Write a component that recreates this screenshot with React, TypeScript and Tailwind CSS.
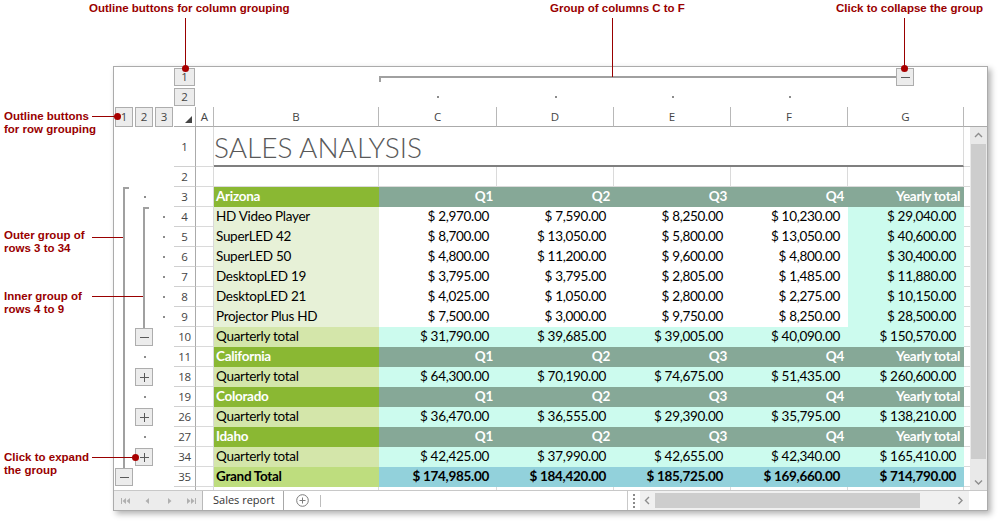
import React from 'react';

type Kind = 'state' | 'product' | 'qtotal' | 'grand';
type SheetRow = { n: number; kind: Kind; label: string; values: string[] };

const QS = ['Q1', 'Q2', 'Q3', 'Q4', 'Yearly total'];
const WIDTHS = ['w-[118px]', 'w-[117px]', 'w-[117px]', 'w-[117px]', 'w-[116px]'];

const ROWS: SheetRow[] = [
  { n: 3, kind: 'state', label: 'Arizona', values: QS },
  { n: 4, kind: 'product', label: 'HD Video Player', values: ['$ 2,970.00', '$ 7,590.00', '$ 8,250.00', '$ 10,230.00', '$ 29,040.00'] },
  { n: 5, kind: 'product', label: 'SuperLED 42', values: ['$ 8,700.00', '$ 13,050.00', '$ 5,800.00', '$ 13,050.00', '$ 40,600.00'] },
  { n: 6, kind: 'product', label: 'SuperLED 50', values: ['$ 4,800.00', '$ 11,200.00', '$ 9,600.00', '$ 4,800.00', '$ 30,400.00'] },
  { n: 7, kind: 'product', label: 'DesktopLED 19', values: ['$ 3,795.00', '$ 3,795.00', '$ 2,805.00', '$ 1,485.00', '$ 11,880.00'] },
  { n: 8, kind: 'product', label: 'DesktopLED 21', values: ['$ 4,025.00', '$ 1,050.00', '$ 2,800.00', '$ 2,275.00', '$ 10,150.00'] },
  { n: 9, kind: 'product', label: 'Projector Plus HD', values: ['$ 7,500.00', '$ 3,000.00', '$ 9,750.00', '$ 8,250.00', '$ 28,500.00'] },
  { n: 10, kind: 'qtotal', label: 'Quarterly total', values: ['$ 31,790.00', '$ 39,685.00', '$ 39,005.00', '$ 40,090.00', '$ 150,570.00'] },
  { n: 11, kind: 'state', label: 'California', values: QS },
  { n: 18, kind: 'qtotal', label: 'Quarterly total', values: ['$ 64,300.00', '$ 70,190.00', '$ 74,675.00', '$ 51,435.00', '$ 260,600.00'] },
  { n: 19, kind: 'state', label: 'Colorado', values: QS },
  { n: 26, kind: 'qtotal', label: 'Quarterly total', values: ['$ 36,470.00', '$ 36,555.00', '$ 29,390.00', '$ 35,795.00', '$ 138,210.00'] },
  { n: 27, kind: 'state', label: 'Idaho', values: QS },
  { n: 34, kind: 'qtotal', label: 'Quarterly total', values: ['$ 42,425.00', '$ 37,990.00', '$ 42,655.00', '$ 42,340.00', '$ 165,410.00'] },
  { n: 35, kind: 'grand', label: 'Grand Total', values: ['$ 174,985.00', '$ 184,420.00', '$ 185,725.00', '$ 169,660.00', '$ 714,790.00'] },
];

const FILL: Record<Kind, { b: string; c: string; g: string }> = {
  state: {
    b: 'bg-[#8ab833] text-white font-bold',
    c: 'bg-[#86a897] text-white font-bold pr-[3px]',
    g: 'bg-[#86a897] text-white font-bold pr-[3px]',
  },
  product: { b: 'bg-[#e7f1d7]', c: 'bg-white pr-[7px]', g: 'bg-[#ccfbee] pr-[7px]' },
  qtotal: { b: 'bg-[#d4e6aa]', c: 'bg-[#ccfbee] pr-[7px]', g: 'bg-[#ccfbee] pr-[7px]' },
  grand: { b: 'bg-[#bedd7e] font-bold', c: 'bg-[#92d1db] font-bold pr-[7px]', g: 'bg-[#92d1db] font-bold pr-[7px]' },
};

const GRID = 'border-r border-b border-[#dadada]';
const UI_FONT = "font-['Open_Sans'] text-[11.5px] text-[#444]";

const Minus = () => (
  <svg width="9" height="1" viewBox="0 0 9 1">
    <rect width="9" height="1" fill="#5a5a5a" />
  </svg>
);

const Plus = () => (
  <svg width="9" height="9" viewBox="0 0 9 9">
    <path d="M4.5 0v9M0 4.5h9" stroke="#5a5a5a" strokeWidth="1" />
  </svg>
);

const OutlineBtn = ({ children, className = '' }: { children: React.ReactNode; className?: string }) => (
  <div
    className={`flex items-center justify-center border border-[#adadad] bg-[#ececec] ${UI_FONT} text-[#333] leading-none ${className}`}
  >
    {children}
  </div>
);

const Dot = ({ className = '' }: { className?: string }) => (
  <div className={`absolute w-[2px] h-[2px] bg-[#8c8c8c] ${className}`} />
);

const RowNum = ({ n, tall = false }: { n?: number; tall?: boolean }) => (
  <div
    className={`w-[22px] ${tall ? 'h-[40px]' : 'h-[20px]'} shrink-0 border-r border-b border-r-[#ababab] border-b-[#d0d0d0] flex items-center justify-center ${UI_FONT}`}
  >
    {n}
  </div>
);

const DataRow = ({ row }: { row: SheetRow }) => {
  const f = FILL[row.kind];
  return (
    <div className="flex h-[20px] font-['Lato'] text-[13.5px] tracking-[-0.3px] leading-[19px] text-black">
      <RowNum n={row.n} />
      <div className={`w-[18px] ${GRID}`} />
      <div className={`w-[165px] border-r border-b border-transparent pl-[2px] whitespace-nowrap ${f.b}`}>{row.label}</div>
      {row.values.map((v, i) => (
        <div
          key={i}
          className={`${WIDTHS[i]} border-r border-b border-transparent text-right whitespace-nowrap ${i === 4 ? f.g : f.c}`}
        >
          {v}
        </div>
      ))}
      <div className="w-[6px] border-b border-[#dadada]" />
    </div>
  );
};

const Chevron = ({ dir }: { dir: 'up' | 'down' | 'left' | 'right' }) => {
  const d = {
    up: 'M1 5l3.5-3.5L8 5',
    down: 'M1 1.5L4.5 5 8 1.5',
    left: 'M5 1L1.5 4.5 5 8',
    right: 'M1.5 1L5 4.5 1.5 8',
  }[dir];
  const vertical = dir === 'up' || dir === 'down';
  return (
    <svg width={vertical ? 9 : 7} height={vertical ? 7 : 9} viewBox={vertical ? '0 0 9 7' : '0 0 7 9'}>
      <path d={d} fill="none" stroke="#8e8e8e" strokeWidth="1.4" />
    </svg>
  );
};

const Callout = ({ className, lines }: { className: string; lines: string[] }) => (
  <div
    className={`absolute font-['Liberation_Sans'] font-bold text-[11.5px] leading-[13px] text-[#990000] whitespace-nowrap ${className}`}
  >
    {lines.map((l) => (
      <div key={l}>{l}</div>
    ))}
  </div>
);

export default function App() {
  return (
    <div className="relative w-[1000px] h-[528px] bg-white overflow-hidden pt-[66px] pl-[113px]">
      {/* spreadsheet window */}
      <div className="w-[875px] h-[445px] border border-[#ababab] bg-white flex flex-col shadow-[3px_3px_6px_rgba(0,0,0,0.3)]">
        {/* column outline area */}
        <div className="flex h-[40px]">
          <div className="w-[60px]" />
          <div className="w-[22px] flex flex-col">
            <OutlineBtn className="w-[21px] h-[18px] mt-[1px]">1</OutlineBtn>
            <OutlineBtn className="w-[21px] h-[18px] mt-[2px]">2</OutlineBtn>
          </div>
          <div className="flex-1 flex flex-col">
            <div className="h-[20px] flex items-start pl-[183px]">
              <div className="w-[517px] h-[6px] mt-[9px] border-t-2 border-l-2 border-[#a0a0a0]" />
              <OutlineBtn className="w-[18px] h-[18px] mt-[1px]">
                <Minus />
              </OutlineBtn>
            </div>
            <div className="h-[20px] flex pl-[183px]">
              {WIDTHS.slice(0, 4).map((w, i) => (
                <div key={i} className={`${w} flex justify-center`}>
                  <div className="w-[2px] h-[2px] mt-[9px] bg-[#8c8c8c]" />
                </div>
              ))}
            </div>
          </div>
        </div>

        {/* column headers */}
        <div className={`flex h-[20px] ${UI_FONT}`}>
          <div className="w-[60px] flex gap-[2px] pl-[1px]">
            <OutlineBtn className="w-[18px] h-[20px]">1</OutlineBtn>
            <OutlineBtn className="w-[18px] h-[20px]">2</OutlineBtn>
            <OutlineBtn className="w-[18px] h-[20px]">3</OutlineBtn>
          </div>
          <div className="w-[22px] border-r border-b border-[#ababab] flex items-end justify-end pr-[3px] pb-[3px]">
            <svg width="7" height="7" viewBox="0 0 7 7">
              <path d="M7 0v7H0z" fill="#444" />
            </svg>
          </div>
          {['A', 'B', 'C', 'D', 'E', 'F', 'G'].map((c, i) => (
            <div
              key={c}
              className={`${['w-[18px]', 'w-[165px]', ...WIDTHS][i]} border-r border-b border-r-[#b8b8b8] border-b-[#ababab] flex items-center justify-center`}
            >
              {c}
            </div>
          ))}
          <div className="flex-1 border-b border-[#ababab]" />
        </div>

        {/* body */}
        <div className="flex h-[363px]">
          {/* row outline */}
          <div className="relative w-[60px]">
            <div className="absolute left-[9px] top-[60px] w-[2px] h-[281px] bg-[#a0a0a0]" />
            <div className="absolute left-[9px] top-[60px] w-[6px] h-[2px] bg-[#a0a0a0]" />
            <Dot className="left-[30px] top-[69px]" />
            <div className="absolute left-[29px] top-[80px] w-[2px] h-[121px] bg-[#a0a0a0]" />
            <div className="absolute left-[29px] top-[80px] w-[6px] h-[2px] bg-[#a0a0a0]" />
            {[89, 109, 129, 149, 169, 189].map((t) => (
              <div key={t} className="absolute left-[49px] w-[2px] h-[2px] bg-[#8c8c8c]" style={{ top: t }} />
            ))}
            <OutlineBtn className="absolute left-[21px] top-[201px] w-[18px] h-[18px]">
              <Minus />
            </OutlineBtn>
            <Dot className="left-[30px] top-[229px]" />
            <OutlineBtn className="absolute left-[21px] top-[241px] w-[18px] h-[18px]">
              <Plus />
            </OutlineBtn>
            <Dot className="left-[30px] top-[269px]" />
            <OutlineBtn className="absolute left-[21px] top-[281px] w-[18px] h-[18px]">
              <Plus />
            </OutlineBtn>
            <Dot className="left-[30px] top-[309px]" />
            <OutlineBtn className="absolute left-[21px] top-[321px] w-[18px] h-[18px]">
              <Plus />
            </OutlineBtn>
            <OutlineBtn className="absolute left-[1px] top-[341px] w-[18px] h-[18px]">
              <Minus />
            </OutlineBtn>
          </div>

          {/* cells */}
          <div className="w-[796px] flex flex-col overflow-hidden">
            <div className="flex h-[40px]">
              <RowNum n={1} tall />
              <div className={`w-[18px] ${GRID}`} />
              <div className="w-[750px] border-b-2 border-r border-b-[#7f7f7f] border-r-[#dadada] font-['Lato'] font-light text-[28px] leading-[32px] pt-[4px] text-[#595959] whitespace-nowrap">
                SALES ANALYSIS
              </div>
              <div className="w-[6px] border-b border-[#dadada]" />
            </div>
            <div className="flex h-[20px]">
              <RowNum n={2} />
              <div className={`w-[18px] ${GRID}`} />
              <div className={`w-[165px] ${GRID}`} />
              {WIDTHS.map((w, i) => (
                <div key={i} className={`${w} ${GRID}`} />
              ))}
              <div className="w-[6px] border-b border-[#dadada]" />
            </div>
            {ROWS.map((r) => (
              <DataRow key={r.n} row={r} />
            ))}
            <div className="flex h-[3px]">
              <div className="w-[22px] border-r border-[#ababab]" />
              <div className="w-[18px] border-r border-[#dadada]" />
              <div className="w-[165px] border-r border-[#dadada]" />
              {WIDTHS.map((w, i) => (
                <div key={i} className={`${w} border-r border-[#dadada]`} />
              ))}
            </div>
          </div>

          {/* vertical scrollbar */}
          <div className="w-[17px] bg-[#e9e9e9] flex flex-col items-center">
            <div className="h-[17px] flex items-center justify-center">
              <Chevron dir="up" />
            </div>
            <div className="w-[15px] h-[315px] bg-[#cdcdcd]" />
            <div className="flex-1 flex items-end pb-[4px]">
              <Chevron dir="down" />
            </div>
          </div>
        </div>

        {/* sheet tabs + horizontal scrollbar */}
        <div className="flex h-[20px] border-t border-[#c8c8c8]">
          <div className="w-[89px] bg-[#ececec] border-r border-[#b9b9b9] flex items-center">
            <svg className="ml-[7px]" width="9" height="6" viewBox="0 0 9 6">
              <path d="M0 0h1v6H0z M5 0v6L1.5 3z M9 0v6L5.5 3z" fill="#b0b0b0" />
            </svg>
            <svg className="ml-[15px]" width="4" height="6" viewBox="0 0 4 6">
              <path d="M4 0v6L0.5 3z" fill="#b0b0b0" />
            </svg>
            <svg className="ml-[19px]" width="4" height="6" viewBox="0 0 4 6">
              <path d="M0 0v6l3.5-3z" fill="#b0b0b0" />
            </svg>
            <svg className="ml-[15px]" width="9" height="6" viewBox="0 0 9 6">
              <path d="M0 0v6l3.5-3z M4 0v6l3.5-3z M8 0h1v6H8z" fill="#b0b0b0" />
            </svg>
          </div>
          <div className="w-[81px] border-r border-[#a8a8a8] flex items-center pl-[10px] font-['Open_Sans'] text-[11px] text-[#333]">
            Sales report
          </div>
          <div className="w-[344px] border-r border-[#c9c9c9] flex items-center">
            <svg className="ml-[12px]" width="13" height="13" viewBox="0 0 13 13">
              <circle cx="6.5" cy="6.5" r="5.8" fill="none" stroke="#7c7c7c" strokeWidth="1" />
              <path d="M6.5 3.5v6M3.5 6.5h6" stroke="#7c7c7c" strokeWidth="1" />
            </svg>
            <div className="ml-[11px] w-[1px] h-[12px] bg-[#bdbdbd]" />
          </div>
          <div className="w-[12px] flex flex-col items-center justify-center gap-[2px]">
            <div className="w-[2px] h-[2px] bg-[#8a8a8a]" />
            <div className="w-[2px] h-[2px] bg-[#8a8a8a]" />
            <div className="w-[2px] h-[2px] bg-[#8a8a8a]" />
            <div className="w-[2px] h-[2px] bg-[#8a8a8a]" />
          </div>
          <div className="w-[329px] bg-[#f0f0f0] flex items-center">
            <div className="w-[15px] flex justify-center">
              <Chevron dir="left" />
            </div>
            <div className="w-[265px] h-[15px] bg-[#cdcdcd]" />
            <div className="flex-1 flex justify-end pr-[5px]">
              <Chevron dir="right" />
            </div>
          </div>
          <div className="w-[18px] bg-white" />
        </div>
      </div>

      {/* callouts */}
      <Callout className="left-[89px] top-[2px]" lines={['Outline buttons for column grouping']} />
      <div className="absolute left-[185px] top-[18px] w-[1px] h-[50px] bg-[#990000]" />
      <div className="absolute left-[182px] top-[65px] w-[7px] h-[7px] rounded-full bg-[#a80000]" />

      <Callout className="left-[550px] top-[2px]" lines={['Group of columns C to F']} />
      <div className="absolute left-[612px] top-[18px] w-[1px] h-[59px] bg-[#990000]" />

      <Callout className="left-[836px] top-[2px]" lines={['Click to collapse the group']} />
      <div className="absolute left-[904px] top-[18px] w-[1px] h-[50px] bg-[#990000]" />
      <div className="absolute left-[901px] top-[65px] w-[7px] h-[7px] rounded-full bg-[#a80000]" />

      <Callout className="left-[4px] top-[110px]" lines={['Outline buttons', 'for row grouping']} />
      <div className="absolute left-[92px] top-[116px] w-[25px] h-[1px] bg-[#990000]" />
      <div className="absolute left-[114px] top-[113px] w-[7px] h-[7px] rounded-full bg-[#a80000]" />

      <Callout className="left-[4px] top-[229px]" lines={['Outer group of', 'rows 3 to 34']} />
      <div className="absolute left-[92px] top-[237px] w-[31px] h-[1px] bg-[#990000]" />

      <Callout className="left-[4px] top-[290px]" lines={['Inner group of', 'rows 4 to 9']} />
      <div className="absolute left-[92px] top-[296px] w-[51px] h-[1px] bg-[#990000]" />

      <Callout className="left-[4px] top-[451px]" lines={['Click to expand', 'the group']} />
      <div className="absolute left-[92px] top-[457px] w-[43px] h-[1px] bg-[#990000]" />
      <div className="absolute left-[132px] top-[454px] w-[7px] h-[7px] rounded-full bg-[#a80000]" />
    </div>
  );
}
